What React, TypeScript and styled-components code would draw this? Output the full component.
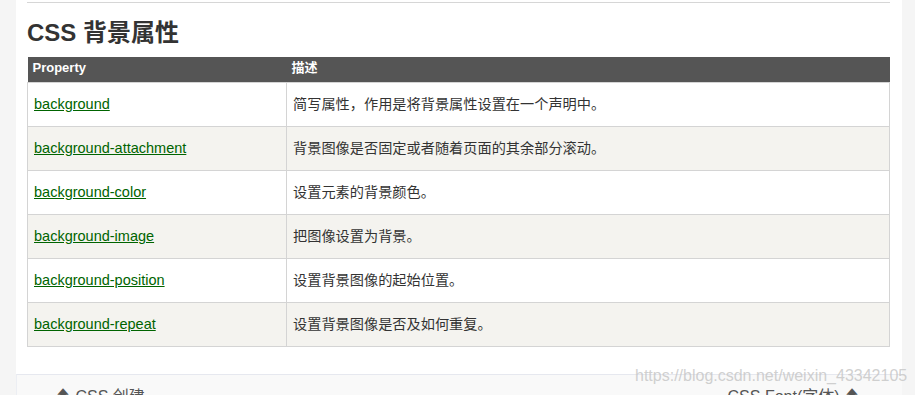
import React from "react";
import styled, { createGlobalStyle } from "styled-components";

const GlobalStyle = createGlobalStyle`
  html, body {
    margin: 0;
    padding: 0;
    height: 395px;
    overflow: hidden;
    background: #f5f5f5;
    font-family: "Liberation Sans", Arial, "Noto Sans CJK SC", sans-serif;
  }
`;

const Page = styled.div`
  display: flex;
  height: 395px;
  overflow: hidden;
  position: relative;
`;

const Gutter = styled.div<{ w: number }>`
  flex: 0 0 ${(p) => p.w}px;
  background: #f5f5f5;
`;

const Main = styled.div`
  flex: 0 0 886px;
  background: #fff;
  display: flex;
  flex-direction: column;
`;

const Article = styled.div`
  padding: 2px 12px 0 11px;
`;

const Divider = styled.div`
  height: 1px;
  background: #d6d6d6;
`;

const Heading = styled.h2`
  margin: 13px 0 0;
  height: 41px;
  box-sizing: border-box;
  padding-top: 2px;
  font-size: 24px;
  line-height: 30px;
  font-weight: bold;
  color: #333;
  font-family: "Liberation Sans", Arial, "Noto Sans CJK SC", sans-serif;
`;

const Table = styled.table`
  width: 100%;
  border-collapse: collapse;
  table-layout: fixed;
`;

const HeadCell = styled.th<{ w?: number }>`
  background: #555;
  color: #fff;
  text-align: left;
  font-size: 13px;
  line-height: 15px;
  font-weight: bold;
  height: 25px;
  padding: 0 5px 3px;
  box-sizing: border-box;
  vertical-align: middle;
  width: ${(p) => (p.w ? `${p.w}px` : "auto")};
  font-family: "Liberation Sans", Arial, "Noto Sans CJK SC", sans-serif;
`;

const Row = styled.tr<{ alt: boolean }>`
  background: ${(p) => (p.alt ? "#f4f3ef" : "#fff")};
`;

const Cell = styled.td`
  border: 1px solid #d4d4d4;
  height: 44px;
  box-sizing: border-box;
  padding: 0 6px;
  font-size: 14.2px;
  line-height: 18px;
  color: #333;
  vertical-align: middle;
  font-family: "Liberation Sans", Arial, "Noto Sans CJK SC", sans-serif;
`;

const PropLink = styled.a`
  color: #006400;
  font-size: 14.5px;
  text-decoration: underline;
  cursor: pointer;
`;

const Footer = styled.div`
  margin-top: 27px;
  flex: 1;
  background: #f9f9f9;
  border-top: 1px solid #e6e8ef;
  border-left: 1px solid #eceef3;
  display: flex;
  justify-content: space-between;
  align-items: flex-start;
  padding: 13px 42px 0 38px;
  font-size: 16px;
  line-height: 18px;
  color: #555;
`;

const NavLink = styled.span`
  display: flex;
  align-items: center;
  gap: 6px;
`;

const Watermark = styled.div`
  position: absolute;
  left: 635px;
  top: 367px;
  font-size: 16px;
  color: rgba(196, 196, 196, 0.8);
  font-family: "Liberation Sans", Arial, sans-serif;
`;

const rows = [
  ["background", "简写属性，作用是将背景属性设置在一个声明中。"],
  ["background-attachment", "背景图像是否固定或者随着页面的其余部分滚动。"],
  ["background-color", "设置元素的背景颜色。"],
  ["background-image", "把图像设置为背景。"],
  ["background-position", "设置背景图像的起始位置。"],
  ["background-repeat", "设置背景图像是否及如何重复。"],
];

export default function App() {
  return (
    <>
      <GlobalStyle />
      <Page>
        <Gutter w={16} />
        <Main>
          <Article>
            <Divider />
            <Heading>CSS 背景属性</Heading>
            <Table>
              <thead>
                <tr>
                  <HeadCell w={259}>Property</HeadCell>
                  <HeadCell>描述</HeadCell>
                </tr>
              </thead>
              <tbody>
                {rows.map(([prop, desc], i) => (
                  <Row key={prop} alt={i % 2 === 1}>
                    <Cell>
                      <PropLink>{prop}</PropLink>
                    </Cell>
                    <Cell>{desc}</Cell>
                  </Row>
                ))}
              </tbody>
            </Table>
          </Article>
          <Footer>
            <NavLink>⬆ CSS 创建</NavLink>
            <NavLink>CSS Font(字体) ⬆</NavLink>
          </Footer>
        </Main>
        <Gutter w={13} />
        <Watermark>https://blog.csdn.net/weixin_43342105</Watermark>
      </Page>
    </>
  );
}
